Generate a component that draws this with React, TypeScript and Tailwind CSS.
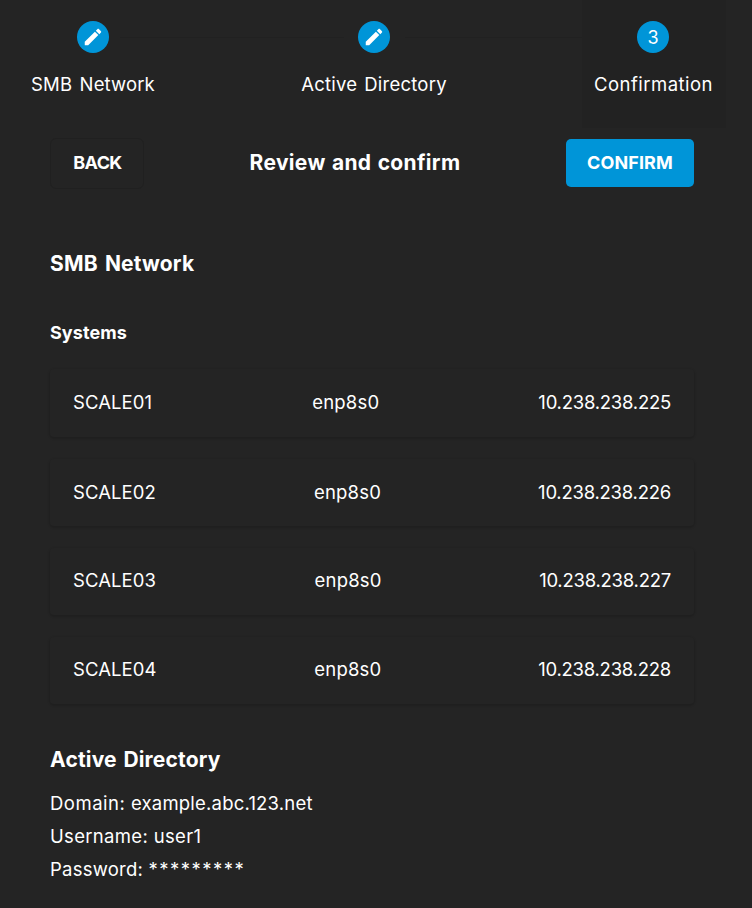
import React from "react";

const systems = [
  { name: "SCALE01", nic: "enp8s0", ip: "10.238.238.225", row: "h-[68px] mb-[22px] pb-px" },
  { name: "SCALE02", nic: "enp8s0", ip: "10.238.238.226", row: "h-[67px] mb-[22px]" },
  { name: "SCALE03", nic: "enp8s0", ip: "10.238.238.227", row: "h-[67px] mb-[22px] pb-[2px]" },
  { name: "SCALE04", nic: "enp8s0", ip: "10.238.238.228", row: "h-[67px] pb-[2px]" },
];

function Pencil() {
  return (
    <svg className="mb-px" width="22" height="22" viewBox="0 0 24 24" fill="#fff">
      <path d="M20.71,7.04C21.1,6.65 21.1,6 20.71,5.63L18.37,3.29C18,2.9 17.35,2.9 16.96,3.29L15.12,5.12L18.87,8.87M3,17.25V21H6.75L17.81,9.93L14.06,6.18L3,17.25Z" />
    </svg>
  );
}

function Step({ label, cls, children }: { label: React.ReactNode; cls: string; children: React.ReactNode }) {
  return (
    <div className={`flex h-32 flex-none flex-col items-center pt-[21px] ${cls}`}>
      <div className="flex h-8 w-8 items-center justify-center rounded-full bg-[#0095d8] text-[18px] leading-none">
        {children}
      </div>
      <div className="mt-[19px] whitespace-nowrap leading-6">{label}</div>
    </div>
  );
}

export default function App() {
  return (
    <div className="h-[908px] w-[752px] overflow-hidden bg-[#242424] font-['Inter',sans-serif] text-[18.5px] text-white">
      <header className="flex h-32">
        <Step cls="w-[186px]" label={<span className="tracking-[0.14px] [word-spacing:2px]">SMB Network</span>}>
          <Pencil />
        </Step>
        <div className="-ml-[66px] mr-[-65px] mt-[37px] h-px flex-1 bg-[#212121]" />
        <Step cls="w-[190px]" label={<span className="tracking-[0.24px] [word-spacing:1.5px]">Active Directory</span>}>
          <Pencil />
        </Step>
        <div className="-ml-[64px] mr-[-44px] mt-[37px] h-px w-[221px] flex-none bg-[#212121]" />
        <Step cls="mr-[26px] w-[144px] bg-[#222222] pr-[2px]" label={<span className="ml-px tracking-[0.46px]">Confirmation</span>}>
          <span className="pt-px">3</span>
        </Step>
      </header>

      <main className="pl-[50px] pr-[58px]">
        <div className="flex h-[70px] items-center justify-between">
          <button className="h-[51px] w-[94px] rounded-[6px] border border-[#202020] pb-[2px] pl-px text-[18px] font-bold">
            <span className="tracking-[-0.6px]">BACK</span>
          </button>
          <h1 className="text-[21px] font-bold tracking-[0.33px] [word-spacing:1px]">Review and confirm</h1>
          <button className="h-12 w-32 rounded-[5px] bg-[#0095d8] pb-[2px] text-[18px] font-bold">
            <span className="tracking-[0.1px]">CONFIRM</span>
          </button>
        </div>

        <h2 className="mt-[52px] text-[21px] font-bold leading-7 tracking-[0.18px] [word-spacing:2px]">SMB Network</h2>
        <h3 className="mt-[43px] text-[18px] font-bold leading-6 tracking-[0.08px]">Systems</h3>
        <div className="mt-[24px]">
          {systems.map((s) => (
            <div
              key={s.name}
              className={`flex items-center justify-between rounded-[4px] px-[23px] shadow-[0_1px_2px_1px_rgba(0,0,0,0.14)] ${s.row}`}
            >
              <span className="tracking-[0.08px]">{s.name}</span>
              <span className="pl-px tracking-[0.2px]">{s.nic}</span>
              <span className="tracking-[-0.24px]">{s.ip}</span>
            </div>
          ))}
        </div>

        <h2 className="mt-[42px] text-[21px] font-bold leading-7 tracking-[0.18px] [word-spacing:1.5px]">Active Directory</h2>
        <div className="mt-[13px] leading-[33px]">
          <div><span className="tracking-[0.5px]">Domain: </span><span className="tracking-[0.2px]">example.abc.123.net</span></div>
          <div><span className="tracking-[0.32px]">Username: </span><span className="tracking-[0.35px]">user1</span></div>
          <div><span className="tracking-[0.23px]">Password: </span><span className="tracking-[1.5px]">*********</span></div>
        </div>
      </main>
    </div>
  );
}
